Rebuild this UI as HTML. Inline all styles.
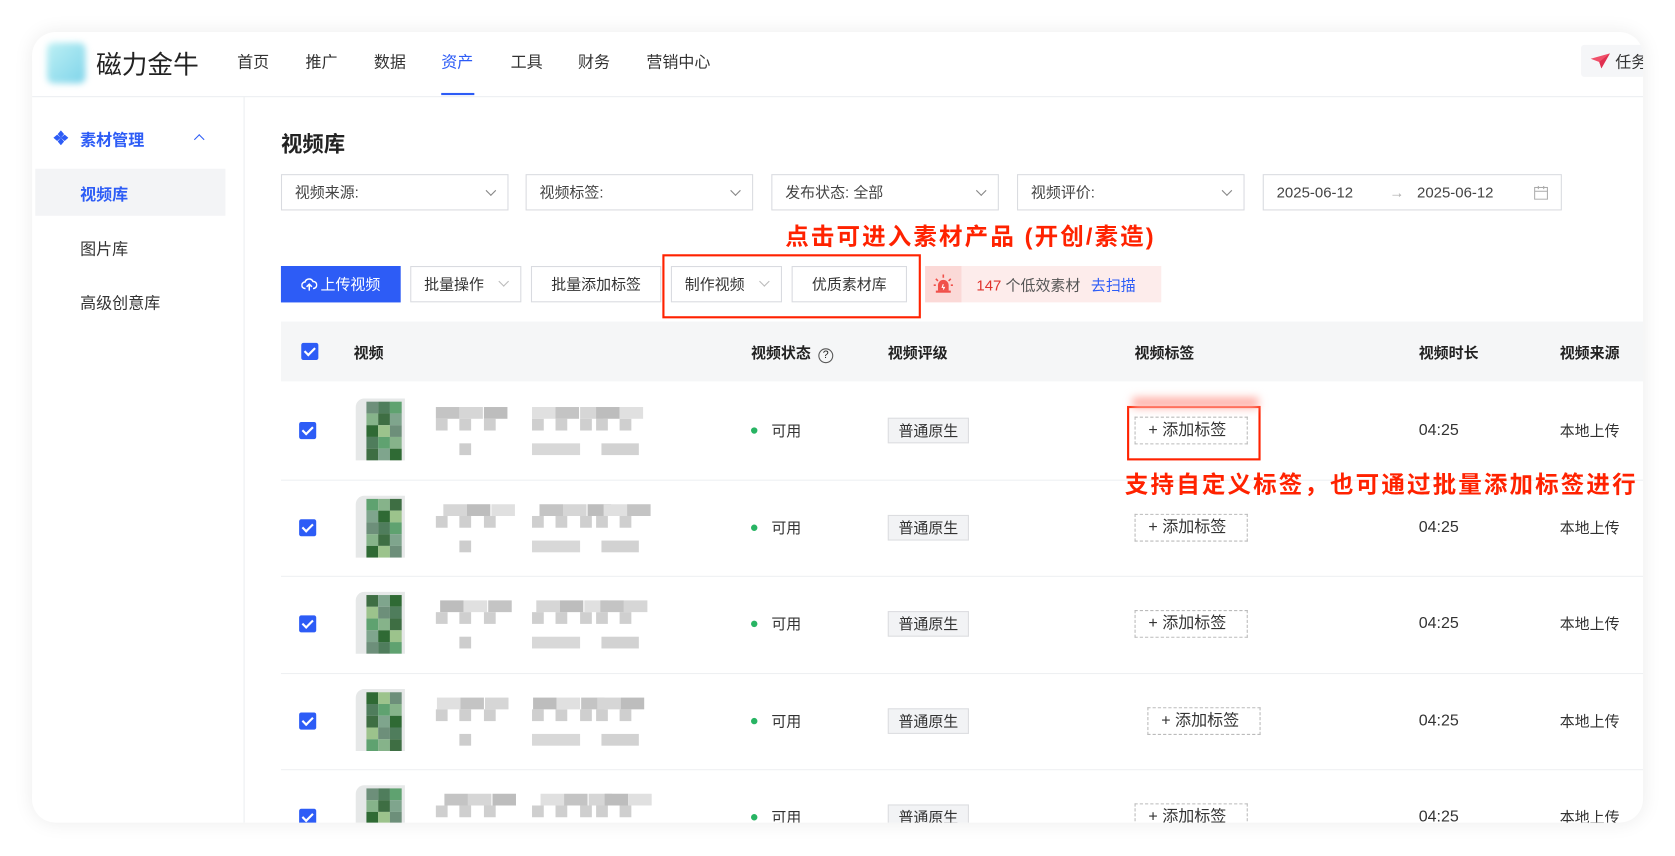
<!DOCTYPE html>
<html><head><meta charset="utf-8"><style>
*{margin:0;padding:0;box-sizing:border-box}
html,body{width:1675px;height:856px;overflow:hidden;background:#fff;font-family:"Liberation Sans","Noto Sans CJK SC",sans-serif;color:#333}
#w{position:absolute;left:0;top:0;width:1568px;height:801px;transform:scale(1.0683);transform-origin:0 0}
.a{position:absolute;white-space:nowrap}
#card{position:absolute;left:30px;top:30px;width:1508px;height:740px;background:#fff;border-radius:22px;overflow:hidden;box-shadow:0 0 18px rgba(0,0,0,.08)}
.nav{font-size:15px;color:#333;top:17px}
.sel{border:1px solid #d9dbe0;height:34px;font-size:14px;color:#444;padding-left:12px;line-height:32px}
.chev{position:absolute;right:12px;top:11px;width:7px;height:7px;border-right:1.3px solid #888;border-bottom:1.3px solid #888;transform:rotate(45deg)}
.btn{border:1px solid #d9dbe0;height:34px;font-size:14px;color:#333;line-height:32px;text-align:center;background:#fff}
.th{font-size:14px;font-weight:bold;color:#222;top:290px}
.cb{width:16px;height:16px;background:#2d5cf6;border-radius:2px}
.cb:after{content:"";position:absolute;left:5px;top:2px;width:4px;height:8px;border-right:2px solid #fff;border-bottom:2px solid #fff;transform:rotate(45deg)}
.tag{background:#f2f3f5;border:1px solid #dcdde0;font-size:14px;padding:0 9px;height:24px;line-height:22px}
.add{border:1px dashed #bbb;font-size:14px;padding:0 12px;height:26px;line-height:24px;width:106px}
.td{font-size:14px;color:#333}
.dot{width:6px;height:6px;border-radius:3px;background:#28b463}
.px{position:absolute}
.red{color:#ff2200;font-weight:bold;font-size:22px;letter-spacing:2px}
</style></head><body><div id="w">
<div id="card">
 <div class="a" style="left:14px;top:10px;width:36px;height:38px;background:linear-gradient(135deg,#bdf0f4,#7fd4ea);filter:blur(3px);border-radius:6px"></div>
 <div class="a" style="left:60px;top:11px;font-size:24px;color:#222">磁力金牛</div>
 <div class="a nav" style="left:192px">首页</div>
 <div class="a nav" style="left:256px">推广</div>
 <div class="a nav" style="left:320px">数据</div>
 <div class="a nav" style="left:383px;color:#2d5cf6">资产</div>
 <div class="a" style="left:383px;top:57px;width:31px;height:2px;background:#2d5cf6"></div>
 <div class="a nav" style="left:448px">工具</div>
 <div class="a nav" style="left:511px">财务</div>
 <div class="a nav" style="left:575px">营销中心</div>
 <div class="a" style="left:1450px;top:12px;width:60px;height:30px;background:#f5f6f8;border-radius:3px"></div>
 <svg class="a" style="left:1458px;top:19px" width="20" height="16" viewBox="0 0 20 16"><path d="M1 6 L19 1 L11 15 L9 9 Z" fill="#f0506a"/><path d="M9 9 L19 1 L11 15Z" fill="#e03050"/></svg>
 <div class="a" style="left:1482px;top:17px;font-size:15px">任务</div>
 <div class="a" style="left:0;top:60px;width:1508px;height:1px;background:#eceef1"></div>
 <div class="a" style="left:198px;top:60px;width:1px;height:680px;background:#eceef1"></div>
 <svg class="a" style="left:20px;top:92px" width="14" height="14" viewBox="0 0 14 14"><path d="M7 0L10 3.5 7 7 4 3.5Z M3.5 4L7 7 3.5 10 0 7Z M10.5 4L14 7 10.5 10 7 7Z M7 7L10 10.5 7 14 4 10.5Z" fill="#2d5cf6"/></svg>
 <div class="a" style="left:45px;top:90px;font-size:15px;color:#2d5cf6;font-weight:bold">素材管理</div>
 <div class="a" style="left:153px;top:97px;width:7px;height:7px;border-left:1.5px solid #2d5cf6;border-top:1.5px solid #2d5cf6;transform:rotate(45deg)"></div>
 <div class="a" style="left:3px;top:128px;width:178px;height:44px;background:#f3f4f6"></div>
 <div class="a" style="left:45px;top:141px;font-size:15px;color:#2d5cf6;font-weight:bold">视频库</div>
 <div class="a" style="left:45px;top:192px;font-size:15px">图片库</div>
 <div class="a" style="left:45px;top:243px;font-size:15px">高级创意库</div>
 <div class="a" style="left:233px;top:89px;font-size:20px;font-weight:bold;color:#222">视频库</div>
 <div class="a sel" style="left:233px;top:133px;width:213px">视频来源:<i class="chev"></i></div>
 <div class="a sel" style="left:462px;top:133px;width:213px">视频标签:<i class="chev"></i></div>
 <div class="a sel" style="left:692px;top:133px;width:213px">发布状态: 全部<i class="chev"></i></div>
 <div class="a sel" style="left:922px;top:133px;width:213px">视频评价:<i class="chev"></i></div>
 <div class="a sel" style="left:1152px;top:133px;width:280px">2025-06-12 <span style="color:#aaa;margin:0 8px 0 30px">→</span> 2025-06-12
  <svg style="position:absolute;right:12px;top:10px" width="13" height="13" viewBox="0 0 13 13"><rect x="0.5" y="1.5" width="12" height="11" fill="none" stroke="#aaa"/><path d="M0.5 5h12M4 0v3M9 0v3" stroke="#aaa"/></svg></div>
 <div class="a red" style="left:705px;top:174px">点击可进入素材产品 (开创/素造)</div>
 <div class="a btn" style="left:233px;top:219px;width:112px;background:#2d5cf6;border-color:#2d5cf6;color:#fff">
  <svg style="vertical-align:-2px;margin-right:3px" width="15" height="14" viewBox="0 0 15 14"><path d="M4 11H3.5A3 3 0 0 1 3.5 5 4 4 0 0 1 11 4.5 3 3 0 0 1 11.5 11H11M7.5 13V7M5 9.5L7.5 7 10 9.5" fill="none" stroke="#fff" stroke-width="1.4"/></svg>上传视频</div>
 <div class="a btn" style="left:354px;top:219px;width:104px;text-align:left;padding-left:12px">批量操作<i class="chev" style="border-color:#bbb;top:10px"></i></div>
 <div class="a btn" style="left:467px;top:219px;width:122px">批量添加标签</div>
 <div class="a btn" style="left:598px;top:219px;width:104px;text-align:left;padding-left:12px">制作视频<i class="chev" style="border-color:#bbb;top:10px"></i></div>
 <div class="a btn" style="left:711px;top:219px;width:108px">优质素材库</div>
 <div class="a" style="left:590px;top:208px;width:242px;height:60px;border:2.5px solid #ff2200"></div>
 <div class="a" style="left:836px;top:219px;width:221px;height:34px;background:#fdeceb"></div>
 <div class="a" style="left:836px;top:219px;width:34px;height:34px;background:#fbd9d7"></div>
 <svg class="a" style="left:843px;top:226px" width="20" height="20" viewBox="0 0 20 20"><path d="M5 16V11A5 5 0 0 1 15 11V16Z" fill="#f0504a"/><rect x="3" y="16" width="14" height="2" fill="#f0504a"/><path d="M10 1v3M3 5l2 2M17 5l-2 2M1 11h2M17 11h2" stroke="#f0504a" stroke-width="1.5"/><path d="M10 10l-1 3h2l-1 2" stroke="#fff" fill="none"/></svg>
 <div class="a" style="left:884px;top:227px;font-size:14px;color:#e0332d">147 <span style="color:#555">个低效素材</span> <span style="color:#2d5cf6;margin-left:6px">去扫描</span></div>
 <div class="a" style="left:233px;top:271px;width:1275px;height:56px;background:#f5f6f7"></div>
 <div class="a cb" style="left:252px;top:291px"></div>
 <div class="a th" style="left:301px">视频</div>
 <div class="a th" style="left:673px">视频状态 <span style="display:inline-block;width:14px;height:14px;border:1px solid #555;border-radius:7px;font-size:10px;text-align:center;line-height:12px;font-weight:normal;margin-left:3px">?</span></div>
 <div class="a th" style="left:801px">视频评级</div>
 <div class="a th" style="left:1032px">视频标签</div>
 <div class="a th" style="left:1298px">视频时长</div>
 <div class="a th" style="left:1430px">视频来源</div>
 <div id="rows"></div>
 <div class="a" style="left:1025px;top:350px;width:125px;height:51px;border:2.5px solid #ff2200"></div>
 <div class="a" style="left:1030px;top:342px;width:118px;height:10px;background:#ffb0a8;filter:blur(4px)"></div>
 <div class="a red" style="left:1023px;top:406px">支持自定义标签，也可通过批量添加标签进行</div>
</div>
</div>
<script>
var ys=[373,464,554,645,735],h='';
var g=['#6d8f7a','#4f7d5c','#5fa270','#86b38a','#3e6e43','#7fa58d','#2f6a34','#9cc38c'];
ys.forEach(function(y,i){
 var top=y-45;
 if(i>0)h+='<div class="a" style="left:233px;top:'+(top)+'px;width:1275px;height:1px;background:#eef0f2"></div>';
 h+='<div class="a cb" style="left:250px;top:'+(y-8)+'px"></div>';
 var t='';
 for(var r=0;r<5;r++)for(var c=0;c<3;c++)t+='<div class="px" style="left:'+(c*11)+'px;top:'+(r*11)+'px;width:11px;height:11px;background:'+g[(r*3+c+i*2)%8]+'"></div>';
 h+='<div class="a" style="left:303px;top:'+(y-30)+'px;width:46px;height:58px;background:#e6e8e8;border-radius:8px 0 0 0;overflow:hidden"><div style="position:absolute;left:10px;top:3px;width:33px;height:55px">'+t+'</div></div>';
 var b='';
 var xs=[0,22,45,90,112,135,150,172];
 for(var k=0;k<8;k++)b+='<div class="px" style="left:'+(xs[k]+(i*7)%10)+'px;top:0;width:22px;height:11px;background:'+(['#c4c4c4','#d6d6d6','#bdbdbd','#e0e0e0'][(k+i)%4])+'"></div><div class="px" style="left:'+(xs[(k+3)%8])+'px;top:11px;width:11px;height:11px;background:#cfcfcf"></div>';
 b+='<div class="px" style="left:22px;top:34px;width:11px;height:11px;background:#cdcdcd"></div><div class="px" style="left:90px;top:34px;width:45px;height:11px;background:#d8d8d8"></div><div class="px" style="left:155px;top:34px;width:35px;height:11px;background:#d2d2d2"></div>';
 h+='<div class="a" style="left:378px;top:'+(y-22)+'px;width:200px;height:50px">'+b+'</div>';
 h+='<div class="a dot" style="left:673px;top:'+(y-3)+'px"></div><div class="a td" style="left:692px;top:'+(y-10)+'px">可用</div>';
 h+='<div class="a tag" style="left:801px;top:'+(y-12)+'px">普通原生</div>';
 h+='<div class="a add" style="left:'+(i==3?1044:1032)+'px;top:'+(y-13)+'px;font-size:15px">+ 添加标签</div>';
 h+='<div class="a td" style="left:1298px;top:'+(y-9)+'px;font-size:15px">04:25</div><div class="a td" style="left:1430px;top:'+(y-10)+'px">本地上传</div>';
});
document.getElementById('rows').outerHTML=h;
</script>
</body></html>
